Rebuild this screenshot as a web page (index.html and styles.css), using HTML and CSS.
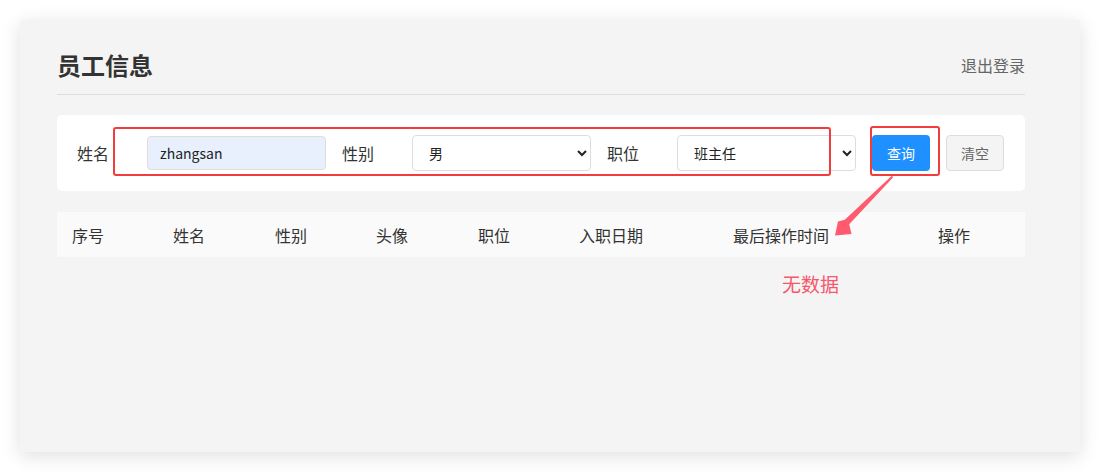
FILE: index.html
```html
<!DOCTYPE html>
<html lang="zh-CN">
<head>
    <meta charset="UTF-8">
    <meta name="viewport" content="width=device-width, initial-scale=1.0">
    <title>员工信息</title>
    <link rel="stylesheet" href="styles.css">
</head>
<body>
    <div id="wrap">
        <div class="header">
            <h1 class="title">员工信息</h1>
            <a class="logout" href="#">退出登录</a>
        </div>

        <form class="search">
            <label class="label">姓名</label>
            <input class="field" type="text" value="zhangsan">
            <label class="label">性别</label>
            <select class="field">
                <option>男</option>
                <option>女</option>
            </select>
            <label class="label">职位</label>
            <select class="field">
                <option>班主任</option>
                <option>讲师</option>
            </select>
            <button class="btn btn-primary" type="button">查询</button>
            <button class="btn btn-plain" type="button">清空</button>
        </form>

        <table class="list">
            <colgroup>
                <col style="width:101px">
                <col style="width:102px">
                <col style="width:101px">
                <col style="width:102px">
                <col style="width:101px">
                <col style="width:154px">
                <col style="width:205px">
                <col>
            </colgroup>
            <thead>
                <tr>
                    <th>序号</th>
                    <th>姓名</th>
                    <th>性别</th>
                    <th>头像</th>
                    <th>职位</th>
                    <th>入职日期</th>
                    <th>最后操作时间</th>
                    <th>操作</th>
                </tr>
            </thead>
        </table>
        <div class="empty">无数据</div>
    </div>

    <!-- 标注 -->
    <div class="mark mark-form"></div>
    <div class="mark mark-btn"></div>
    <svg class="arrow" width="1101" height="473" viewBox="0 0 1101 473">
        <path d="M891.8 175.8 L893.2 177.2 L849.2 224.2 L851.5 234 L835 235.5 L838 221.5 L844.8 219.8 Z" fill="#ff5a6e"/>
    </svg>
</body>
</html>
```

FILE: styles.css
```css
body {
    margin: 0;
    padding-bottom: 21px;
    background: #fff;
    font-family: "Noto Sans CJK SC", "Noto Sans", sans-serif;
    color: #333;
}
#wrap {
    margin: 20px 0 0 20px;
    width: 968px;
    height: 404px;
    padding: 28px 55px 0 37px;
    background: #f4f4f4;
    box-shadow: 0 4px 18px rgba(0, 0, 0, .13);
}
.header {
    display: flex;
    justify-content: space-between;
    align-items: center;
    padding-bottom: 12px;
    border-bottom: 1px solid #ddd;
}
.title {
    margin: 0;
    font-size: 24px;
    line-height: 34px;
    font-weight: bold;
    color: #333;
}
.logout {
    font-size: 16px;
    color: #666;
    text-decoration: none;
}
.search {
    margin: 20px 0 0;
    padding: 20px;
    display: flex;
    align-items: center;
    background: #fff;
    border-radius: 5px;
}
.label {
    width: 70px;
    font-size: 16px;
    line-height: 36px;
    color: #333;
}
.field {
    box-sizing: border-box;
    width: 179px;
    height: 36px;
    margin-right: 16px;
    padding: 0 12px;
    border: 1px solid #ddd;
    border-radius: 4px;
    font: 14px "Noto Sans CJK SC", sans-serif;
    color: #222;
    background: #fff;
    outline: none;
}
input.field {
    height: 34px;
    background: #e8f0fe;
}
.btn {
    box-sizing: border-box;
    width: 58px;
    height: 36px;
    padding: 0;
    border-radius: 4px;
    font: 14px "Noto Sans CJK SC", sans-serif;
    cursor: pointer;
}
.btn-primary {
    margin-right: 16px;
    border: none;
    background: #1e90ff;
    color: #fff;
}
.btn-plain {
    border: 1px solid #ddd;
    background: #f4f4f4;
    color: #666;
}
.list {
    margin-top: 21px;
    width: 968px;
    table-layout: fixed;
    border-collapse: collapse;
    background: #fafafa;
}
.list th {
    height: 45px;
    padding: 0 0 0 15px;
    text-align: left;
    font-size: 16px;
    font-weight: normal;
    color: #333;
}
.empty {
    margin-top: 13px;
    padding-left: 725px;
    font-size: 19px;
    line-height: 28px;
    color: #f5576c;
}
.mark {
    position: absolute;
    box-sizing: border-box;
    border: 2px solid #f03c3c;
    border-radius: 3px;
}
.mark-form {
    left: 113px;
    top: 127px;
    width: 718px;
    height: 49px;
}
.mark-btn {
    left: 870px;
    top: 126px;
    width: 70px;
    height: 50px;
}
.arrow {
    position: absolute;
    left: 0;
    top: 0;
    pointer-events: none;
}
```
